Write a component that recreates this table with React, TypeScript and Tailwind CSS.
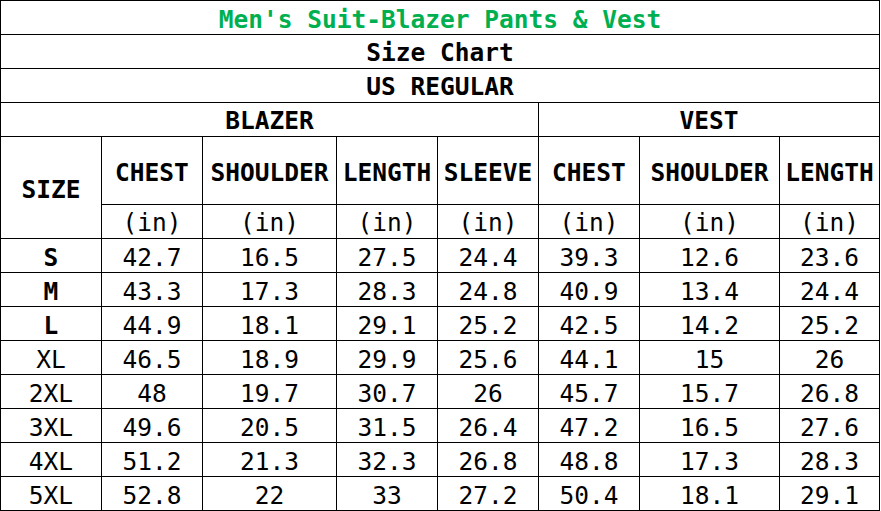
import React from "react";

const rows = [
    { size: "S", bold: true, vals: ["42.7", "16.5", "27.5", "24.4", "39.3", "12.6", "23.6"] },
    { size: "M", bold: true, vals: ["43.3", "17.3", "28.3", "24.8", "40.9", "13.4", "24.4"] },
    { size: "L", bold: true, vals: ["44.9", "18.1", "29.1", "25.2", "42.5", "14.2", "25.2"] },
    { size: "XL", bold: false, vals: ["46.5", "18.9", "29.9", "25.6", "44.1", "15", "26"] },
    { size: "2XL", bold: false, vals: ["48", "19.7", "30.7", "26", "45.7", "15.7", "26.8"] },
    { size: "3XL", bold: false, vals: ["49.6", "20.5", "31.5", "26.4", "47.2", "16.5", "27.6"] },
    { size: "4XL", bold: false, vals: ["51.2", "21.3", "32.3", "26.8", "48.8", "17.3", "28.3"] },
    { size: "5XL", bold: false, vals: ["52.8", "22", "33", "27.2", "50.4", "18.1", "29.1"] },
];

const heads = ["CHEST", "SHOULDER", "LENGTH", "SLEEVE", "CHEST", "SHOULDER", "LENGTH"];

const cell = "flex items-center justify-center border-r border-b border-black whitespace-pre";

export default function App() {
    return (
        <div className="w-[881px] h-[511px] bg-white overflow-hidden">
            <div
                className="grid grid-cols-[101px_101px_134px_101px_101px_101px_140px_100px] grid-rows-[34px_34px_34px_34px_68px_34px_repeat(8,34px)] w-[880px] border-l border-t border-black text-black text-[24.5px] leading-none"
                style={{ fontFamily: '"DejaVu Sans Mono", "Liberation Mono", monospace' }}
            >
                {/* title rows */}
                <div className={`${cell} col-span-8 font-bold text-[#00b050] pt-[5px]`}>Men's Suit-Blazer Pants & Vest</div>
                <div className={`${cell} col-span-8 font-bold pt-[4px]`}>Size Chart</div>
                <div className={`${cell} col-span-8 font-bold pt-[4px]`}>US REGULAR</div>
                <div className={`${cell} col-span-5 font-bold pt-[4px]`}>BLAZER</div>
                <div className={`${cell} col-span-3 font-bold pt-[4px]`}>VEST</div>
                {/* header */}
                <div className={`${cell} row-span-2 font-bold pt-[6px]`}>SIZE</div>
                {heads.map((h, i) => (
                    <div key={"h" + i} className={`${cell} font-bold pt-[6px]`}>{h}</div>
                ))}
                {heads.map((_, i) => (
                    <div key={"u" + i} className={`${cell} pt-[4px]`}>(in)</div>
                ))}
                {/* data */}
                {rows.map((row) => (
                    <React.Fragment key={row.size}>
                        <div className={`${cell} pt-[5px] ${row.bold ? "font-bold" : ""}`}>{row.size}</div>
                        {row.vals.map((v, i) => (
                            <div key={row.size + i} className={`${cell} pt-[5px]`}>{v}</div>
                        ))}
                    </React.Fragment>
                ))}
            </div>
        </div>
    );
};
